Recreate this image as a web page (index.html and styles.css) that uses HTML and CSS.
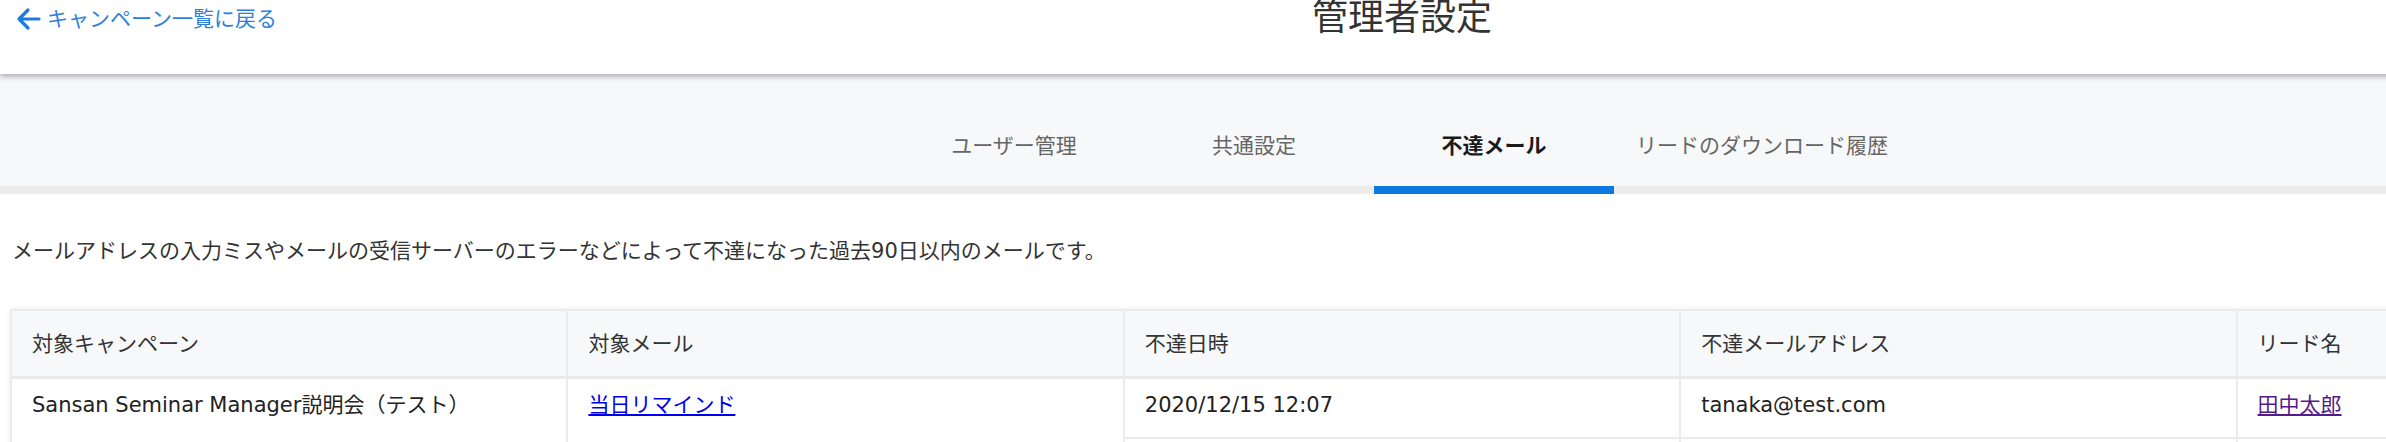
FILE: index.html
```html
<!DOCTYPE html>
<html lang="ja">
<head>
    <meta charset="UTF-8">
    <meta name="viewport" content="width=device-width, initial-scale=1.0">
    <title>管理者設定</title>
    <link rel="stylesheet" href="styles.css">
</head>
<body>
    <div class="page">
        <header class="header">
            <a class="back-link" href="#">
                <svg class="back-icon" width="25" height="24" viewBox="0 0 25 24">
                    <path d="M23 12H3M12 3l-9 9 9 9" fill="none" stroke="#1f7ae0" stroke-width="3.2" stroke-linecap="round" stroke-linejoin="round"/>
                </svg>
                <span>キャンペーン一覧に戻る</span>
            </a>
            <h1 class="title">管理者設定</h1>
            <div></div>
        </header>

        <nav class="tabs">
            <a class="tab" href="#">ユーザー管理</a>
            <a class="tab" href="#">共通設定</a>
            <a class="tab active" href="#">不達メール</a>
            <a class="tab" href="#">リードのダウンロード履歴</a>
        </nav>

        <p class="description">メールアドレスの入力ミスやメールの受信サーバーのエラーなどによって不達になった過去90日以内のメールです。</p>

        <table class="bounce-table">
            <thead>
                <tr>
                    <th>対象キャンペーン</th>
                    <th>対象メール</th>
                    <th>不達日時</th>
                    <th>不達メールアドレス</th>
                    <th>リード名</th>
                </tr>
            </thead>
            <tbody>
                <tr>
                    <td rowspan="2">Sansan Seminar Manager説明会（テスト）</td>
                    <td rowspan="2"><a class="mail-link" href="#">当日リマインド</a></td>
                    <td>2020/12/15 12:07</td>
                    <td>tanaka@test.com</td>
                    <td><a class="lead-link" href="#">田中太郎</a></td>
                </tr>
                <tr>
                    <td>&nbsp;</td>
                    <td>&nbsp;</td>
                    <td>&nbsp;</td>
                </tr>
            </tbody>
        </table>
    </div>
</body>
</html>
```

FILE: styles.css
```css
body {
    margin: 0;
    overflow: hidden;
    font-family: "DejaVu Sans", "Noto Sans CJK JP", sans-serif;
    font-size: 21px;
    color: #333;
    background-color: #fff;
}
.page {
    width: 2804px;
}
.header {
    display: grid;
    grid-template-columns: 1fr auto 1fr;
    height: 74px;
    background-color: #fff;
    box-shadow: 0 2px 6px rgba(0, 0, 0, 0.35);
    position: relative;
    z-index: 1;
}
.back-link {
    display: flex;
    align-items: center;
    align-self: start;
    gap: 6px;
    padding: 7px 0 0 16px;
    color: #2f80dc;
    text-decoration: none;
    line-height: 24px;
}
.back-icon {
    flex: none;
}
.title {
    margin: 0;
    font-size: 36px;
    line-height: 36px;
    font-weight: normal;
    color: #333;
}
.tabs {
    display: flex;
    justify-content: center;
    padding-top: 28px;
    background-color: #f7f8fa;
    border-bottom: 8px solid #ececec;
}
.tab {
    display: flex;
    align-items: center;
    justify-content: center;
    box-sizing: border-box;
    min-width: 240px;
    height: 92px;
    padding: 0 22px;
    margin-bottom: -8px;
    border-bottom: 8px solid transparent;
    color: #666;
    text-decoration: none;
}
.tab.active {
    color: #1a1a1a;
    font-weight: bold;
    border-bottom-color: #0b79e0;
}
.description {
    margin: 0;
    padding: 42px 12px 43px;
    line-height: 30px;
    color: #333;
}
.bounce-table {
    width: 2784px;
    margin: 0 10px;
    table-layout: fixed;
    border-collapse: collapse;
    box-shadow: 0 0 6px rgba(0, 0, 0, 0.08);
}
.bounce-table th,
.bounce-table td {
    border: 2px solid #ebebeb;
    padding: 0 20px;
    text-align: left;
    line-height: 30px;
}
.bounce-table th {
    height: 65px;
    font-weight: normal;
    background-color: #f7f8fa;
    border-bottom-width: 3px;
    color: #333;
}
.bounce-table td {
    vertical-align: top;
    padding-top: 11px;
    padding-bottom: 17px;
    color: #222;
}
.mail-link {
    color: #0000ee;
}
.lead-link {
    color: #551a8b;
}
```
